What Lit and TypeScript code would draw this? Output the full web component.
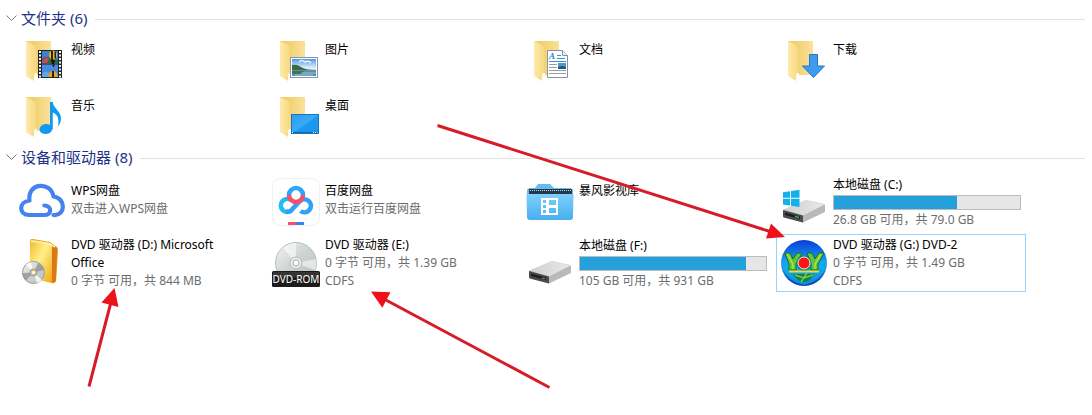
import { LitElement, html, svg, css, nothing, TemplateResult } from "lit";
import { customElement, property } from "lit/decorators.js";
import { classMap } from "lit/directives/class-map.js";

interface Item {
  name: string;
  icon: string;
  details?: string[];
  used?: number;
  selected?: boolean;
}

const folder = svg`
  <path d="M8 4H33V38H17L8 36Z" fill="url(#fback)"/>
  <path d="M16 36h3v3l-1 3-2-1z" fill="#fffdf5"/>
  <path d="M8 4L16 8Q18 9 18 12V35Q16 36 16 39V44L8 39Z" fill="url(#fflap)"/>`;

const drive = svg`
  <path d="M3 32L25 22.500Q26 22 28 22.500L44 26Q45.500 27 45 29V34L23 44.500L4 39.500Q3 39 3 38Z" fill="#b9b9b9"/>
  <path d="M3.500 31.500L25 22.500Q26 22 28 22.500L44.500 26.500L23 37.500Z" fill="url(#dtop)"/>
  <path d="M3 32L23 37.500V44.500L4 39.500Q3 39 3 38Z" fill="#4a4b4c"/>
  <path d="M5 34.500L20 38.500V41L5 37Z" fill="#1d1e1f"/>`;

const icons: Record<string, TemplateResult> = {
  video: svg`${folder}
    <rect x="20" y="13" width="24" height="28" fill="#20242b"/>
    <rect x="24" y="14" width="16" height="12.500" fill="#3f7fd6"/>
    <rect x="24" y="27.500" width="16" height="12.500" fill="#4a8ae0"/>
    <path d="M24 22q4-4 8-1l8 2v3.500H24z" fill="#2d6d35"/>
    <path d="M24 24l4-4 3 2-2 4h-5z" fill="#d8415f"/>
    <path d="M24 37q3-4 7-1l9 2v2H24z" fill="#5da9e6"/>
    <ellipse cx="35" cy="18" rx="4" ry="4.500" fill="#f0b90f"/><path d="M33 14h2v9h-2zM36.500 14.500h1.500v7h-1.500z" fill="#30220c"/>
    <path d="M33 23h4l-1 4h-2z" fill="#15120c"/>
    <path d="M31 38q0-4 4-4t4 4v2h-8z" fill="#f0a31a"/><path d="M34 34h2v6h-2z" fill="#30220c"/><path d="M34 27.500h3l-1.500 3z" fill="#171a20"/>
    <path d="M22 14V41M42 14V41" stroke="#f7f7f7" stroke-width="2" stroke-dasharray="2 1.500"/>`,
  music: svg`${folder}
    <ellipse cx="28" cy="36" rx="6.500" ry="5" transform="rotate(-10 28 36)" fill="#109bf0"/>
    <path d="M32 9H34.800C35.500 16 43.500 18 43 26C43 29 41.500 31.500 40 33.500C41 28 41 22 34.800 19.500V36H32Z" fill="#109bf0"/>`,
  picture: svg`${folder}
    <rect x="18.500" y="20.500" width="27" height="20" fill="#fff" stroke="#7f99b5"/>
    <rect x="20" y="22" width="24" height="17" fill="url(#sky)"/>
    <path d="M20 28q5-1 9 2t15 3v1H20z" fill="#3c6b40"/>
    <path d="M20 33h24v6H20z" fill="#5c8eae"/><path d="M20 34h13l-6 3h-7z" fill="#45705c"/><path d="M30 36h14M23 38h18" stroke="#98c0d4"/>
    <path d="M27 25q3-3 6 0 4-2 6 1" fill="none" stroke="#e8f3fc" stroke-width="1.500"/>`,
  desktop: svg`${folder}
    <rect x="19.500" y="21.500" width="27" height="19" fill="url(#desk)" stroke="#1478bd"/>
    <path d="M20 39.500H46" stroke="#1169a8"/><path d="M20 39.500h1.500M41 39.500h4.500" stroke="#fff" stroke-dasharray="1 1"/>`,
  document: svg`${folder}
    <path d="M21.500 13.500H36.500L41.500 18.500V40.500H21.500Z" fill="#fff" stroke="#8293a5"/>
    <path d="M36.500 13.500V18.500H41.500" fill="#edf1f4" stroke="#8293a5"/>
    <text x="23" y="22" font-family="Liberation Serif, serif" font-style="italic" font-weight="bold" font-size="9" fill="#2680c4">A</text>
    <path d="M31 18.500h4M31 21.500h8M23 24.500H40" stroke="#3a91cf"/>
    <path d="M23 27.500h8M23 30.500h8M23 33.500h17M23 36.500h17" stroke="#93a0ab"/>
    <rect x="32" y="26" width="8" height="6" fill="#4c9bd1"/><path d="M32 32v-2l4-1 4 1v2z" fill="#27566d"/>`,
  download: svg`${folder}
    <path d="M29.500 17.500H37.500V29H44.500L33.500 40.500L22.500 29H29.500Z" fill="#3d9cf0" stroke="#2479c5"/>`,
  wps: svg`
    <path d="M26.300 27.500C34 27.500 34 37 27 37H11C1 37 0 24 11.500 22.500C9 4.500 33 3 35.500 18.500C48 20 48 38 35.500 37" fill="none" stroke="#4382ef" stroke-width="4.200" stroke-linecap="round" stroke-linejoin="round"/>`,
  baidu: svg`
    <rect x=".5" y=".5" width="47" height="47" rx="8" fill="#fff" stroke="#f1f1f3"/>
    <g fill="none" stroke-width="4.600">
      <path d="M19.500 32.500A6.500 6.500 0 1 1 19.500 22.500" stroke="#25b8fb"/>
      <path d="M28.500 33A6.500 6.500 0 1 0 28 23L19 32.500Q17 34 14 33.500" stroke="#2fa2f8"/>
      <path d="M17 17A7 7 0 0 1 31 17" stroke="#2aa7fa"/>
      <path d="M17 17A7 7 0 0 0 31 17" stroke="#f4516c"/>
    </g>
    <path d="M16 44h8v3h-8z" fill="#f4516c"/><path d="M24 44h8v3h-8z" fill="#3385f5"/>`,
  library: svg`
    <path d="M1 13Q1 10 4 10H9L12 6H24L28 10H43Q47 10 47 13V20H1Z" fill="#5fbdf0"/>
    <rect x="3" y="11" width="43" height="8" fill="#263949"/><path d="M4 12.500H46" stroke="#c3dae8" stroke-dasharray="1 1"/>
    <path d="M.5 16H47.500L47 39Q47 42 44 42H4Q1 42 1 39Z" fill="url(#lib)"/>
    <path d="M15 20H32V37H15ZM17 22V25H20V22ZM17 27V30H20V27ZM17 32V35H20V32ZM23 22V27H30V22ZM23 30V35H30V30Z" fill="#fff" fill-rule="evenodd"/>`,
  drive: svg`${drive}<path d="M16 38.500l3 .8v1l-3-.8z" fill="#8f9a90"/>`,
  system: svg`${drive}<path d="M15 37.800l4 1v1.500l-4-1z" fill="#35b44a"/>
    <path d="M3 14.300L10 13.200V19.700H3ZM11 13L19.500 11.800V19.700H11ZM3 20.700H10V27.500L3 26.500ZM11 20.700H19.500V28.900L11 27.700Z" fill="#11b2ec"/>`,
  office: svg`
    <path d="M12 2Q12-.5 15 0L32 3L39 8Q40 9 40 12L38 42Q37 45 34 44L12 38Z" fill="#e9a11c"/>
    <path d="M12 2Q12 0 14 .5L32 4Q34 5 34 7V42Q34 44 32 43.500L12 39Z" fill="url(#book)"/>
    <path d="M34 6L39 9L38 42L34 44Z" fill="#d97815"/>
    <path d="M13 2L32 5L37 8" fill="none" stroke="#fff1ad" stroke-width="1.500"/>
    <circle cx="15.500" cy="33.500" r="11" fill="url(#disc)" stroke="#9b9b9b"/>
    <path d="M15.500 33.500L8 25.500A11 11 0 0 1 13 23ZM15.500 33.500L24 41A11 11 0 0 1 19 44Z" fill="#fff" opacity=".8"/>
    <path d="M15.500 33.500L4.500 34Q5 39 8 41.500ZM15.500 33.500L20 24Q25 27 26 31Z" fill="#777" opacity=".55"/>
    <circle cx="15.500" cy="33.500" r="3.500" fill="#d9c087" stroke="#999"/><circle cx="15.500" cy="33.500" r="1.500" fill="#fff"/>`,
  dvd: svg`
    <circle cx="24" cy="24" r="20.500" fill="url(#disc)" stroke="#b9c0bf"/>
    <path d="M24 24L11 9Q17 4 24 4ZM24 24L44 20Q45 27 43 31Z" fill="#fff" opacity=".55"/>
    <circle cx="24" cy="24" r="6" fill="#e6eae9" stroke="#b4bbba"/><circle cx="24" cy="24" r="3" fill="#fff" stroke="#a9b0af"/>
    <rect x="0" y="32" width="48" height="16" rx="1.500" fill="#1c1c1c"/><path d="M1 33h46v5H1z" fill="#353535"/>
    <text x="24" y="44" text-anchor="middle" font-family="Noto Sans, sans-serif" font-size="10" fill="#fff">DVD-ROM</text>`,
  game: svg`
    <circle cx="24" cy="24" r="23" fill="url(#orb)"/>
    <path d="M2 28Q24 18 46 28Q40 43 24 46Q8 43 2 28Z" fill="#13bfe6" opacity=".6"/>
    <path d="M5 14h5l3 6 4-6h5l-6 11v6h-7v-6zM27 14h5l3 6 4-6h5l-6 11v6h-7v-6z" fill="#5dc93d" stroke="#146c35"/>
    <path d="M7 15l6 10v5M41 15l-6 10v5" stroke="#b5dc3c" stroke-width="1.500" fill="none"/>
    <path d="M9 32.500H39" stroke="#eedb39" stroke-width="2"/>
    <path d="M13 35h21q-3 7-10 8-7-1-11-8z" fill="#127e54"/><path d="M15 36l9 3 9-3M27 34l-6 9" stroke="#74cf3a" stroke-width="1.500" fill="none"/>
    <circle cx="24" cy="24" r="7.500" fill="#197b75"/><circle cx="24" cy="24" r="6" fill="#ff1515" stroke="#e9f4ef"/>`,
};

@customElement("drive-tile")
class DriveTile extends LitElement {
  @property({ attribute: false }) item!: Item;

  static styles = css`
    :host { display: block; }
    .tile {
      display: grid;
      grid-template-columns: 48px minmax(0, 1fr);
      column-gap: 5px;
      align-items: center;
      box-sizing: border-box;
      height: 100%;
      padding: 0 4px 0 3px;
      border: 1px solid transparent;
      color: #000;
      text-decoration: none;
    }
    .selected { border-color: #99d1ff; }
    .icon { display: block; width: 48px; height: 48px; overflow: visible; }
    .text { display: block; min-height: 40px; }
    .line { display: block; padding-right: 12px; }
    .detail { color: #6d6d6d; }
    .bar {
      display: block;
      box-sizing: border-box;
      height: 15px;
      margin: 1px 0;
      border: 1px solid #bcbcbc;
      background: #e6e6e6;
    }
    .fill { display: block; height: 100%; background: #26a0da; }
  `;

  render() {
    const { name, icon, details = [], used, selected = false } = this.item;
    return html`
      <a class=${classMap({ tile: true, selected })} href="#">
        <svg class="icon" viewBox="0 0 48 48" aria-hidden="true">
          <defs>
            <linearGradient id="fback"><stop offset=".3" stop-color="#f1cf70"/><stop offset="1" stop-color="#fbe29a"/></linearGradient>
            <linearGradient id="fflap"><stop stop-color="#ffeaa9"/><stop offset="1" stop-color="#f6d880"/></linearGradient>
            <linearGradient id="sky" x2="0" y2="1"><stop stop-color="#5597e3"/><stop offset=".5" stop-color="#d8ecfa"/></linearGradient>
            <linearGradient id="desk" y2="1"><stop stop-color="#2b9df1"/><stop offset=".5" stop-color="#3aabf8"/><stop offset=".52" stop-color="#1f98f1"/><stop offset="1" stop-color="#1b94ec"/></linearGradient>
            <linearGradient id="lib" x2="0" y2="1"><stop stop-color="#7dd0fb"/><stop offset="1" stop-color="#48aef0"/></linearGradient>
            <linearGradient id="dtop"><stop stop-color="#cfcfcf"/><stop offset="1" stop-color="#e9e9e9"/></linearGradient>
            <linearGradient id="book" y2="1"><stop stop-color="#f5b92d"/><stop offset=".45" stop-color="#fff08a"/><stop offset="1" stop-color="#f1a811"/></linearGradient>
            <linearGradient id="disc" y2="1"><stop stop-color="#f0f2f1"/><stop offset=".5" stop-color="#cdd3d1"/><stop offset="1" stop-color="#b8bebd"/></linearGradient>
            <linearGradient id="orb" x2="0" y2="1"><stop stop-color="#0a3ad8"/><stop offset=".5" stop-color="#18a8ee"/><stop offset="1" stop-color="#0834b4"/></linearGradient>
          </defs>
          ${icons[icon]}
        </svg>
        <span class="text">
          <span class="line">${name}</span>
          ${used === undefined ? nothing : html`
            <span class="bar" role="meter" aria-label=${name} aria-valuemin="0" aria-valuemax="100" aria-valuenow=${used}>
              <span class="fill" style="width:${used}%"></span>
            </span>`}
          ${details.map((d) => html`<span class="line detail">${d}</span>`)}
        </span>
      </a>`;
  }
}

@customElement("app-root")
class AppRoot extends LitElement {
  static styles = css`
    :host {
      display: block;
      position: relative;
      min-height: 100vh;
      overflow: hidden;
      background: #fff;
      font: 12px/18px "Noto Sans", "Noto Sans CJK SC", sans-serif;
    }
    .head {
      display: flex;
      align-items: center;
      gap: 7px;
      padding: 0 7px 0 6px;
    }
    .head::after { content: ""; flex: 1; height: 1px; background: #e2e2e2; }
    .folders-head { padding-top: 8px; }
    .title { margin: 0; font-size: inherit; }
    .toggle {
      display: flex;
      align-items: center;
      gap: 4px;
      padding: 0 0 2px;
      border: 0;
      background: none;
      color: #1e3287;
      font: 15px/20px "Noto Sans", "Noto Sans CJK SC", sans-serif;
    }
    .chevron { width: 11px; height: 7px; fill: none; stroke: #777; }
    .grid {
      display: grid;
      grid-template-columns: repeat(auto-fill, 250px);
      column-gap: 4px;
      margin: 0;
      padding: 0 0 0 14px;
      list-style: none;
    }
    .cell { display: grid; }
    .folders { grid-auto-rows: 56px; padding-top: 3px; padding-bottom: 2px; }
    .devices { grid-auto-rows: minmax(58px, auto); row-gap: 3px; padding-top: 4px; }
    .arrows {
      position: absolute;
      top: 0;
      left: 0;
      width: 1092px;
      height: 415px;
      pointer-events: none;
      stroke: #d81b28;
      stroke-width: 3;
    }
    .tip { fill: #ed1219; stroke: none; }
  `;

  private folders: Item[] = [
    { name: "视频", icon: "video" },
    { name: "图片", icon: "picture" },
    { name: "文档", icon: "document" },
    { name: "下载", icon: "download" },
    { name: "音乐", icon: "music" },
    { name: "桌面", icon: "desktop" },
  ];

  private devices: Item[] = [
    { name: "WPS网盘", icon: "wps", details: ["双击进入WPS网盘"] },
    { name: "百度网盘", icon: "baidu", details: ["双击运行百度网盘"] },
    { name: "暴风影视库", icon: "library" },
    { name: "本地磁盘 (C:)", icon: "system", used: 66, details: ["26.8 GB 可用，共 79.0 GB"] },
    { name: "DVD 驱动器 (D:) Microsoft Office", icon: "office", details: ["0 字节 可用，共 844 MB"] },
    { name: "DVD 驱动器 (E:)", icon: "dvd", details: ["0 字节 可用，共 1.39 GB", "CDFS"] },
    { name: "本地磁盘 (F:)", icon: "drive", used: 89, details: ["105 GB 可用，共 931 GB"] },
    { name: "DVD 驱动器 (G:) DVD-2", icon: "game", selected: true, details: ["0 字节 可用，共 1.49 GB", "CDFS"] },
  ];

  private section(title: string, kind: string, items: Item[]) {
    return html`
      <section>
        <div class="head ${kind}-head">
          <h2 class="title">
            <button class="toggle" aria-expanded="true">
              <svg class="chevron" viewBox="0 0 11 7" aria-hidden="true"><path d="M.5.500L5.500 5.500L10.500.500"/></svg>
              ${title} (${items.length})
            </button>
          </h2>
        </div>
        <ul class="grid ${kind}">
          ${items.map((item) => html`<li class="cell"><drive-tile .item=${item}></drive-tile></li>`)}
        </ul>
      </section>`;
  }

  render() {
    return html`
      <main>
        ${this.section("文件夹", "folders", this.folders)}
        ${this.section("设备和驱动器", "devices", this.devices)}
      </main>
      <svg class="arrows" viewBox="0 0 1092 415" aria-hidden="true">
        <path d="M437.500 125.500L770 231.500M89 386.500L111 302M549.500 387.500L384 299"/>
        <path class="tip" d="M785 237L771 223.500L766 238.500ZM114.500 288L101.500 302.500L118.500 307ZM371 291.500L390.500 292.300L382.300 307.800Z"/>
      </svg>`;
  }
}
